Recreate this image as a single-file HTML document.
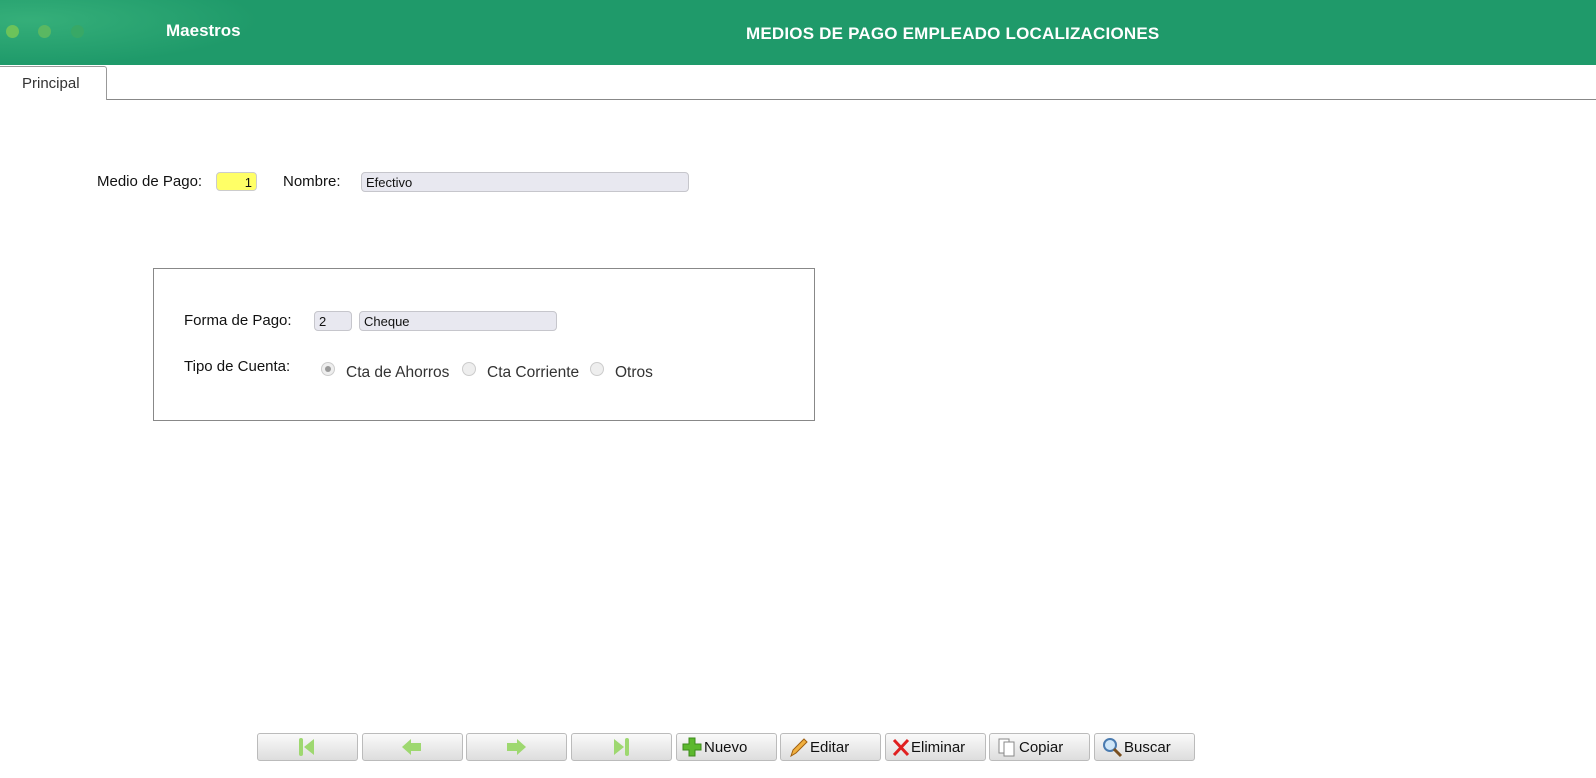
<!DOCTYPE html>
<html><head><meta charset="utf-8"><style>
*{margin:0;padding:0;box-sizing:border-box}
body{width:1596px;height:778px;background:#fff;font-family:"Liberation Sans",sans-serif;position:relative;overflow:hidden}
.hdr{position:absolute;left:0;top:0;width:1596px;height:65px;background:#1f9a6a}
.glow{position:absolute;left:0;top:0;width:260px;height:65px;background:radial-gradient(ellipse at 30px 20px,rgba(80,200,140,.45),rgba(31,154,106,0) 70%)}
.dot{position:absolute;top:25px;width:13px;height:13px;border-radius:50%}
.t1{position:absolute;left:166px;top:21px;color:#fff;font-weight:bold;font-size:17px}
.t2{position:absolute;left:746px;top:24px;color:#fff;font-weight:bold;font-size:17px;letter-spacing:.2px}
.tab{position:absolute;left:0;top:66px;width:107px;height:34px;border:1px solid #999;border-bottom:none;border-left:none;border-radius:0 3px 0 0;background:#fff;font-size:15px;color:#333;padding:8px 0 0 22px}
.line{position:absolute;left:106px;top:99px;width:1490px;height:1px;background:#888}
.lbl{position:absolute;font-size:15px;color:#111}
.in{position:absolute;background:#e8e8f0;border:1px solid #c6c6cc;border-radius:4px;font-size:13px;padding:2px 4px;color:#111}
.box{position:absolute;left:153px;top:268px;width:662px;height:153px;border:1px solid #888}
.rad{position:absolute;width:14px;height:14px;border-radius:50%;border:1px solid #ccc;background:#eee}
.btn{position:absolute;top:733px;width:101px;height:28px;border:1px solid #bbb;border-radius:3px;background:linear-gradient(#fafafa,#ddd);font-size:15px;color:#111;display:flex;align-items:center;padding-left:6px}
.btn svg{margin-right:1px}
.nav{justify-content:center;padding:0}
</style></head><body>
<div class="hdr"><div class="glow"></div>
<div class="dot" style="left:6px;background:#6cc35a"></div>
<div class="dot" style="left:38px;background:#5ab862"></div>
<div class="dot" style="left:71px;background:#38a866"></div>
<div class="t1">Maestros</div><div class="t2">MEDIOS DE PAGO EMPLEADO LOCALIZACIONES</div></div>
<div class="line"></div>
<div class="tab">Principal</div>
<div class="lbl" style="left:97px;top:173px">Medio de Pago:</div>
<div class="in" style="left:216px;top:172px;width:41px;height:19px;background:#ffff66;text-align:right;border-color:#ccc">1</div>
<div class="lbl" style="left:283px;top:173px">Nombre:</div>
<div class="in" style="left:361px;top:172px;width:328px;height:20px">Efectivo</div>
<div class="box"></div>
<div class="lbl" style="left:184px;top:312px">Forma de Pago:</div>
<div class="in" style="left:314px;top:311px;width:38px;height:20px">2</div>
<div class="in" style="left:359px;top:311px;width:198px;height:20px">Cheque</div>
<div class="lbl" style="left:184px;top:358px">Tipo de Cuenta:</div>
<div class="rad" style="left:321px;top:362px"><div style="width:6px;height:6px;border-radius:50%;background:#999;margin:3px"></div></div>
<div class="lbl" style="left:346px;top:364px;color:#333;font-size:15.5px">Cta de Ahorros</div>
<div class="rad" style="left:462px;top:362px"></div>
<div class="lbl" style="left:487px;top:364px;color:#333;font-size:15.5px">Cta Corriente</div>
<div class="rad" style="left:590px;top:362px"></div>
<div class="lbl" style="left:615px;top:364px;color:#333;font-size:15.5px">Otros</div>

<div class="btn nav" style="left:257px"><svg width="22" height="22"><rect x="3" y="2" width="4" height="18" rx="2" fill="#9ed870"/><path d="M8 11 L18 3 V19Z" fill="#9ed870"/></svg></div>
<div class="btn nav" style="left:362px"><svg width="24" height="22"><path d="M2 11 L11 3 V7 H21 V15 H11 V19Z" fill="#9ed870"/></svg></div>
<div class="btn nav" style="left:466px"><svg width="24" height="22"><path d="M22 11 L13 3 V7 H3 V15 H13 V19Z" fill="#9ed870"/></svg></div>
<div class="btn nav" style="left:571px"><svg width="22" height="22"><rect x="15" y="2" width="4" height="18" rx="2" fill="#9ed870"/><path d="M14 11 L4 3 V19Z" fill="#9ed870"/></svg></div>
<div class="btn" style="left:676px;padding-left:4px"><svg width="22" height="22"><path d="M8 2h6v6h6v6h-6v6H8v-6H2V8h6z" fill="#5cb82e" stroke="#3d8a1c"/></svg>Nuevo</div>
<div class="btn" style="left:780px"><svg width="22" height="22"><path d="M4 20 L6 14 L17 3 L20 6 L9 17Z" fill="#f0b040" stroke="#a06010"/></svg>Editar</div>
<div class="btn" style="left:885px"><svg width="18" height="22"><path d="M2 4 L16 19 M16 4 L2 19" stroke="#e02020" stroke-width="3"/></svg>Eliminar</div>
<div class="btn" style="left:989px"><svg width="22" height="22"><rect x="3" y="3" width="10" height="14" fill="#fff" stroke="#888"/><rect x="8" y="6" width="10" height="14" fill="#fff" stroke="#888"/></svg>Copiar</div>
<div class="btn" style="left:1094px"><svg width="22" height="22"><circle cx="9" cy="9" r="6" fill="#cfe6f8" stroke="#4a7bb0" stroke-width="2"/><path d="M13 13 L20 20" stroke="#7a5020" stroke-width="3"/></svg>Buscar</div>
</body></html>
